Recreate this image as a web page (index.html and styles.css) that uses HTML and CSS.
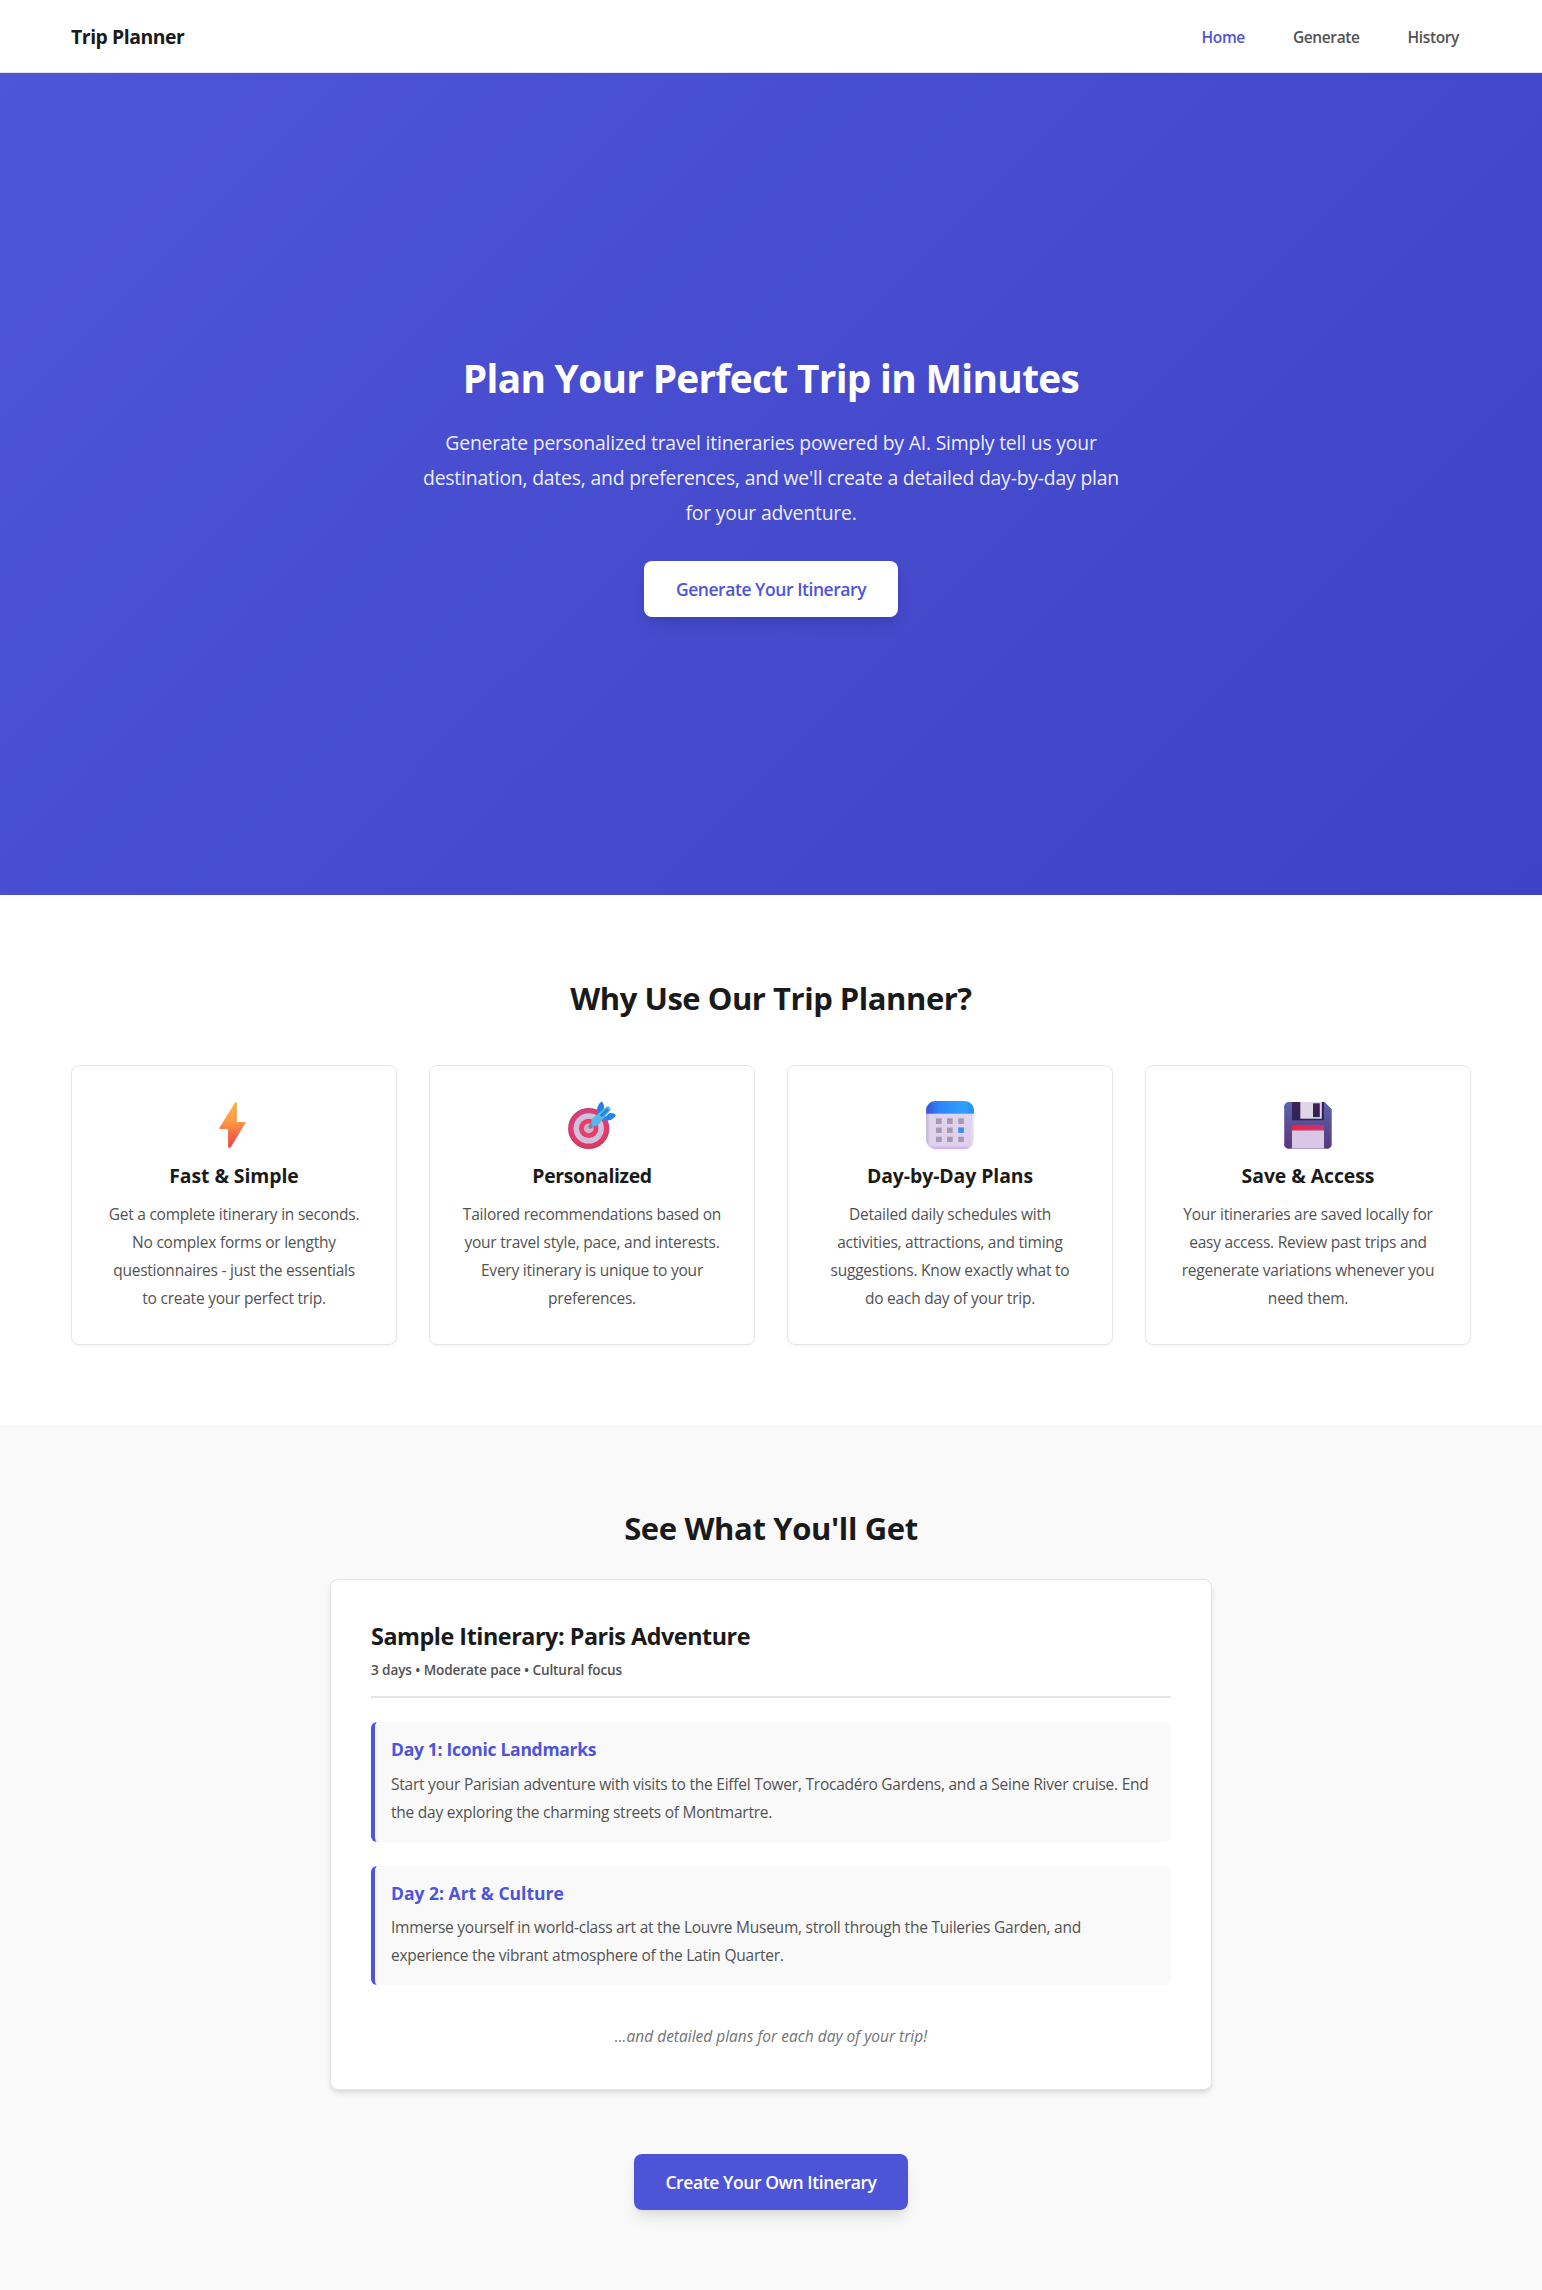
FILE: index.html
```html
<!DOCTYPE html>
<html lang="en">
<head>
<meta charset="utf-8">
<title>Trip Planner</title>
<link rel="stylesheet" href="styles.css">
</head>
<body>
<header class="header">
  <div class="header-inner">
    <a class="logo">Trip Planner</a>
    <nav class="nav">
      <a class="nav-link active">Home</a>
      <a class="nav-link">Generate</a>
      <a class="nav-link">History</a>
    </nav>
  </div>
</header>

<section class="hero">
  <h1 class="hero-title">Plan Your Perfect Trip in Minutes</h1>
  <p class="hero-text">Generate personalized travel itineraries powered by AI. Simply tell us your destination, dates, and preferences, and we'll create a detailed day-by-day plan for your adventure.</p>
  <a class="button button-light">Generate Your Itinerary</a>
</section>

<section class="features">
  <h2 class="section-title">Why Use Our Trip Planner?</h2>
  <div class="feature-grid">
    <article class="feature">
      <svg class="feature-icon" viewBox="0 0 48 48">
        <defs><linearGradient id="bolt" x1="0" y1="0" x2="0" y2="1"><stop offset="0" stop-color="#fcb73f"/><stop offset=".42" stop-color="#fb9b45"/><stop offset=".85" stop-color="#f4514a"/><stop offset="1" stop-color="#ee4454"/></linearGradient></defs>
        <path d="M25.200 1.200q1.400-.7 1.400.6V21h8.600q.8 0 .4.8L20.900 46q-.4.7-1.200.7h-.8q-.8 0-.8-.8V28.100H10q-1.200 0-.6-1.400z" fill="url(#bolt)"/>
        <path d="M26.200 2V21.300M18.500 28.500V46" stroke="#d9823f" stroke-width=".8" opacity=".65" fill="none"/>
      </svg>
      <h3 class="feature-title">Fast &amp; Simple</h3>
      <p class="feature-text">Get a complete itinerary in seconds. No complex forms or lengthy questionnaires - just the essentials to&nbsp;create your perfect trip.</p>
    </article>
    <article class="feature">
      <svg class="feature-icon" viewBox="0 0 48 48">
        <defs><linearGradient id="rim" x1=".3" y1="0" x2=".6" y2="1"><stop offset="0" stop-color="#cf4380"/><stop offset=".4" stop-color="#e53a78"/><stop offset="1" stop-color="#e03a5c"/></linearGradient></defs>
        <circle cx="20.700" cy="27.400" r="20.500" fill="url(#rim)"/>
        <circle cx="20.700" cy="27.400" r="19.900" fill="none" stroke="#b93d62" stroke-width="1.200" opacity=".6"/>
        <circle cx="20.700" cy="27.400" r="15.200" fill="#cfc1dd"/>
        <circle cx="20.700" cy="27.400" r="9.700" fill="#ee3a66"/>
        <circle cx="20.700" cy="27.400" r="4.900" fill="#c8b7d3"/>
        <path d="M22.300 25.800 26 22.200" stroke="#8c7a96" stroke-width="4" stroke-linecap="round"/>
        <path d="M29.500 13.500C28.200 7.500 29.800 3 33.700.5 36 2.500 36.300 5 35.800 8.500L30.500 15zM34 19.300 41 12.500C43.500 11.500 46 12.200 47.900 14.200 45.500 18.600 41 20.700 34.500 19z" fill="#2683e6"/>
        <path d="M23.300 22.500C23 18.500 24.500 17.300 27.500 15L38.500 5.800Q40.800 4.500 41.500 6.800 43.700 7.500 42 9.800L32.200 21.500C29.500 25 26.500 26.200 24.300 25.200Q23.300 24.500 23.300 22.500z" fill="#50b9ed"/>
        <path d="M33 15.300 39.800 8.100" stroke="#2c80dc" stroke-width="3"/>
      </svg>
      <h3 class="feature-title feature-title-tight">Personalized</h3>
      <p class="feature-text">Tailored recommendations based on your travel style, pace, and interests. Every itinerary is unique to your preferences.</p>
    </article>
    <article class="feature">
      <svg class="feature-icon" viewBox="0 0 48 48">
        <defs>
          <linearGradient id="cal-top"><stop offset="0" stop-color="#3552d3"/><stop offset=".25" stop-color="#2f82f6"/><stop offset=".8" stop-color="#2ea1ff"/><stop offset="1" stop-color="#278cf0"/></linearGradient>
          <linearGradient id="cal-page" x1="0" y1="0" x2="0" y2="1"><stop offset="0" stop-color="#e0d3ee"/><stop offset=".9" stop-color="#dfd0ee"/><stop offset="1" stop-color="#cfa4f3"/></linearGradient>
          <linearGradient id="cal-edge"><stop offset="0" stop-color="#a99bb8" stop-opacity=".6"/><stop offset=".08" stop-color="#a99bb8" stop-opacity="0"/><stop offset=".94" stop-color="#fff" stop-opacity="0"/><stop offset="1" stop-color="#fff" stop-opacity=".5"/></linearGradient>
        </defs>
        <path d="M.1 12.500H47.900V39a9 9 0 0 1-9 9H9.100a9 9 0 0 1-9-9z" fill="url(#cal-page)"/>
        <path d="M.1 12.500H47.900V39a9 9 0 0 1-9 9H9.100a9 9 0 0 1-9-9z" fill="url(#cal-edge)"/>
        <path d="M.1 12.700V9a9 9 0 0 1 9-9H38.900a9 9 0 0 1 9 9v3.700z" fill="url(#cal-top)"/>
        <path d="M10 17.200h5.700v5.700H10zM21 17.200h5.700v5.700H21zM32.200 17.200h5.700v5.700h-5.700zM10 26.400h5.700v5.500H10zM21 26.400h5.700v5.500H21zM10 35.700h5.700v5.400H10zM21 35.700h5.700v5.400H21zM32.200 35.700h5.700v5.400h-5.700z" fill="#a69ab2"/>
        <path d="M32.200 26.400h5.700v5.500h-5.700z" fill="#3094f3"/>
      </svg>
      <h3 class="feature-title">Day-by-Day Plans</h3>
      <p class="feature-text">Detailed daily schedules with activities, attractions, and timing suggestions. Know exactly what to do each day of your trip.</p>
    </article>
    <article class="feature">
      <svg class="feature-icon" viewBox="0 0 48 48">
        <defs>
          <linearGradient id="disk" x1="0" y1="0" x2="0" y2="1"><stop offset="0" stop-color="#5c62ae"/><stop offset="1" stop-color="#5b3678"/></linearGradient>
          <linearGradient id="shutter" x1="0" y1="0" x2="0" y2="1"><stop offset="0" stop-color="#452051"/><stop offset="1" stop-color="#272557"/></linearGradient>
          <linearGradient id="stripe"><stop offset="0" stop-color="#ed2330"/><stop offset="1" stop-color="#c9317c"/></linearGradient>
        </defs>
        <path d="M5 1H40.500L47.800 8.300V43a5 5 0 0 1-5 5H5a5 5 0 0 1-5-5V6a5 5 0 0 1 5-5z" fill="url(#disk)"/>
        <path d="M.5 43V6M47.300 43V8.500" stroke="#9d90c4" stroke-width=".8" opacity=".7"/>
        <path d="M8 1H40V18.500Q40 19.300 39.200 19.300H8.800Q8 19.300 8 18.500z" fill="url(#shutter)"/>
        <path d="M16.300 1H37.800V17.700H16.300z" fill="#dfd5e8"/>
        <path d="M29 2.300h6.800v13.800H29z" fill="url(#shutter)"/>
        <path d="M8 25q0-1 1-1H39q1 0 1 1v4.700H8z" fill="url(#stripe)"/>
        <path d="M8 29.400H40V48H8z" fill="#d8c8e5"/>
        <path d="M8 29H40" stroke="#c8628e" stroke-width=".7"/>
        <path d="M5 47.600H43" stroke="#a58fc0" stroke-width=".8"/>
      </svg>
      <h3 class="feature-title">Save &amp; Access</h3>
      <p class="feature-text">Your itineraries are saved locally for easy access. Review past trips and regenerate variations whenever you need them.</p>
    </article>
  </div>
</section>

<section class="preview">
  <h2 class="section-title preview-heading">See What You'll Get</h2>
  <div class="sample">
    <div class="sample-header">
      <h3 class="sample-title">Sample Itinerary: Paris Adventure</h3>
      <p class="sample-meta">3 days • Moderate pace • Cultural focus</p>
    </div>
    <div class="day">
      <h4 class="day-title">Day 1: Iconic Landmarks</h4>
      <p class="day-text">Start your Parisian adventure with visits to the Eiffel Tower, Trocadéro Gardens, and a Seine River cruise. End the day exploring the charming streets of Montmartre.</p>
    </div>
    <div class="day">
      <h4 class="day-title day-title-loose">Day 2: Art &amp; Culture</h4>
      <p class="day-text">Immerse yourself in world-class art at the Louvre Museum, stroll through the Tuileries Garden, and experience the vibrant atmosphere of the Latin Quarter.</p>
    </div>
    <p class="sample-more">...and detailed plans for each day of your trip!</p>
  </div>
  <a class="button button-primary">Create Your Own Itinerary</a>
</section>
</body>
</html>
```
FILE: styles.css
```css
* { box-sizing: border-box; margin: 0; padding: 0; }

body {
  font-family: "Open Sans", "Noto Sans", sans-serif;
  font-size: 15.5px;
  line-height: 28px;
  letter-spacing: -0.25px;
  color: #1a1a1a;
  background: #fff;
}

.header { height: 73px; border-bottom: 1px solid #e5e5e5; background: #fff; }
.header-inner {
  max-width: 1400px;
  height: 72px;
  margin: 0 auto;
  display: flex;
  align-items: center;
  justify-content: space-between;
}
.logo { padding-top: 2px; font-size: 19.4px; font-weight: 700; letter-spacing: -0.45px; }
.nav { display: flex; gap: 24px; padding-top: 1px; }
.nav-link { padding: 0 12px; font-weight: 600; letter-spacing: -0.38px; color: #525252; }
.nav-link.active { color: #4e54d8; }

.hero {
  height: 822px;
  display: flex;
  flex-direction: column;
  align-items: center;
  justify-content: center;
  text-align: center;
  color: #fff;
  background: linear-gradient(135deg, #4f55d8 0%, #3e42c5 100%);
}
.hero-title { padding-top: 2px; font-size: 38.8px; line-height: 48px; letter-spacing: -0.68px; margin-bottom: 23px; }
.hero-text {
  max-width: 704px;
  font-size: 19.4px;
  line-height: 35px;
  letter-spacing: -0.21px;
  color: rgba(255, 255, 255, 0.92);
  margin-bottom: 31px;
}

.button {
  height: 56px;
  display: flex;
  align-items: center;
  justify-content: center;
  border-radius: 8px;
  font-size: 17.5px;
  font-weight: 600;
  box-shadow: 0 10px 15px -3px rgba(0, 0, 0, 0.1), 0 4px 6px -2px rgba(0, 0, 0, 0.05);
}
.button-light { width: 254px; background: #fff; color: #4e54d8; letter-spacing: -0.45px; }
.button-primary { width: 274px; background: #4e54d8; color: #fff; letter-spacing: -0.41px; }

.features { max-width: 1400px; margin: 0 auto; padding: 80px 0; }
.section-title {
  padding-top: 4px;
  font-size: 31px;
  line-height: 38px;
  letter-spacing: -0.47px;
  text-align: center;
  margin-bottom: 48px;
}
.feature-grid { display: grid; grid-template-columns: repeat(4, 1fr); gap: 32px; }
.feature {
  height: 280px;
  padding: 35px 32px 32px;
  display: flex;
  flex-direction: column;
  align-items: center;
  text-align: center;
  border: 1px solid #e5e5e5;
  border-radius: 8px;
  box-shadow: 0 1px 2px rgba(0, 0, 0, 0.05);
}
.feature-icon { width: 48px; height: 48px; flex: none; margin-bottom: 14px; }
.feature-title { font-size: 19.4px; line-height: 26px; letter-spacing: -0.06px; margin-bottom: 11px; }
.feature-title-tight { letter-spacing: -0.35px; }
.feature-text { letter-spacing: -0.23px; color: #525252; }

.preview {
  padding: 80px 0;
  display: flex;
  flex-direction: column;
  align-items: center;
  background: #f9f9f9;
}
.preview-heading { letter-spacing: -0.37px; margin-bottom: 32px; }
.sample {
  width: 882px;
  padding: 40px;
  margin-bottom: 64px;
  background: #fff;
  border: 1px solid #e5e5e5;
  border-radius: 8px;
  box-shadow: 0 4px 6px -1px rgba(0, 0, 0, 0.1), 0 2px 4px -1px rgba(0, 0, 0, 0.06);
}
.sample-header { padding-bottom: 16px; margin-bottom: 24px; border-bottom: 2px solid #e5e5e5; }
.sample-title { padding-top: 1.200px; font-size: 23.3px; line-height: 31px; letter-spacing: -0.44px; margin-bottom: 7px; }
.sample-meta { font-size: 13.6px; line-height: 21px; font-weight: 600; letter-spacing: -0.12px; color: #525252; }
.day {
  padding: 16px;
  margin-bottom: 24px;
  border-left: 4px solid #4e54d8;
  border-radius: 6px;
  background: #f9f9f9;
}
.day-title { font-size: 17.5px; line-height: 23.4px; letter-spacing: -0.29px; color: #4e54d8; margin-bottom: 8px; }
.day-title-loose { letter-spacing: 0; }
.day-text { color: #525252; letter-spacing: -0.235px; }
.sample-more {
  margin-top: 36px;
  padding-top: 2px;
  line-height: 26px;
  text-align: center;
  font-style: italic;
  letter-spacing: 0;
  color: #737373;
}
```
